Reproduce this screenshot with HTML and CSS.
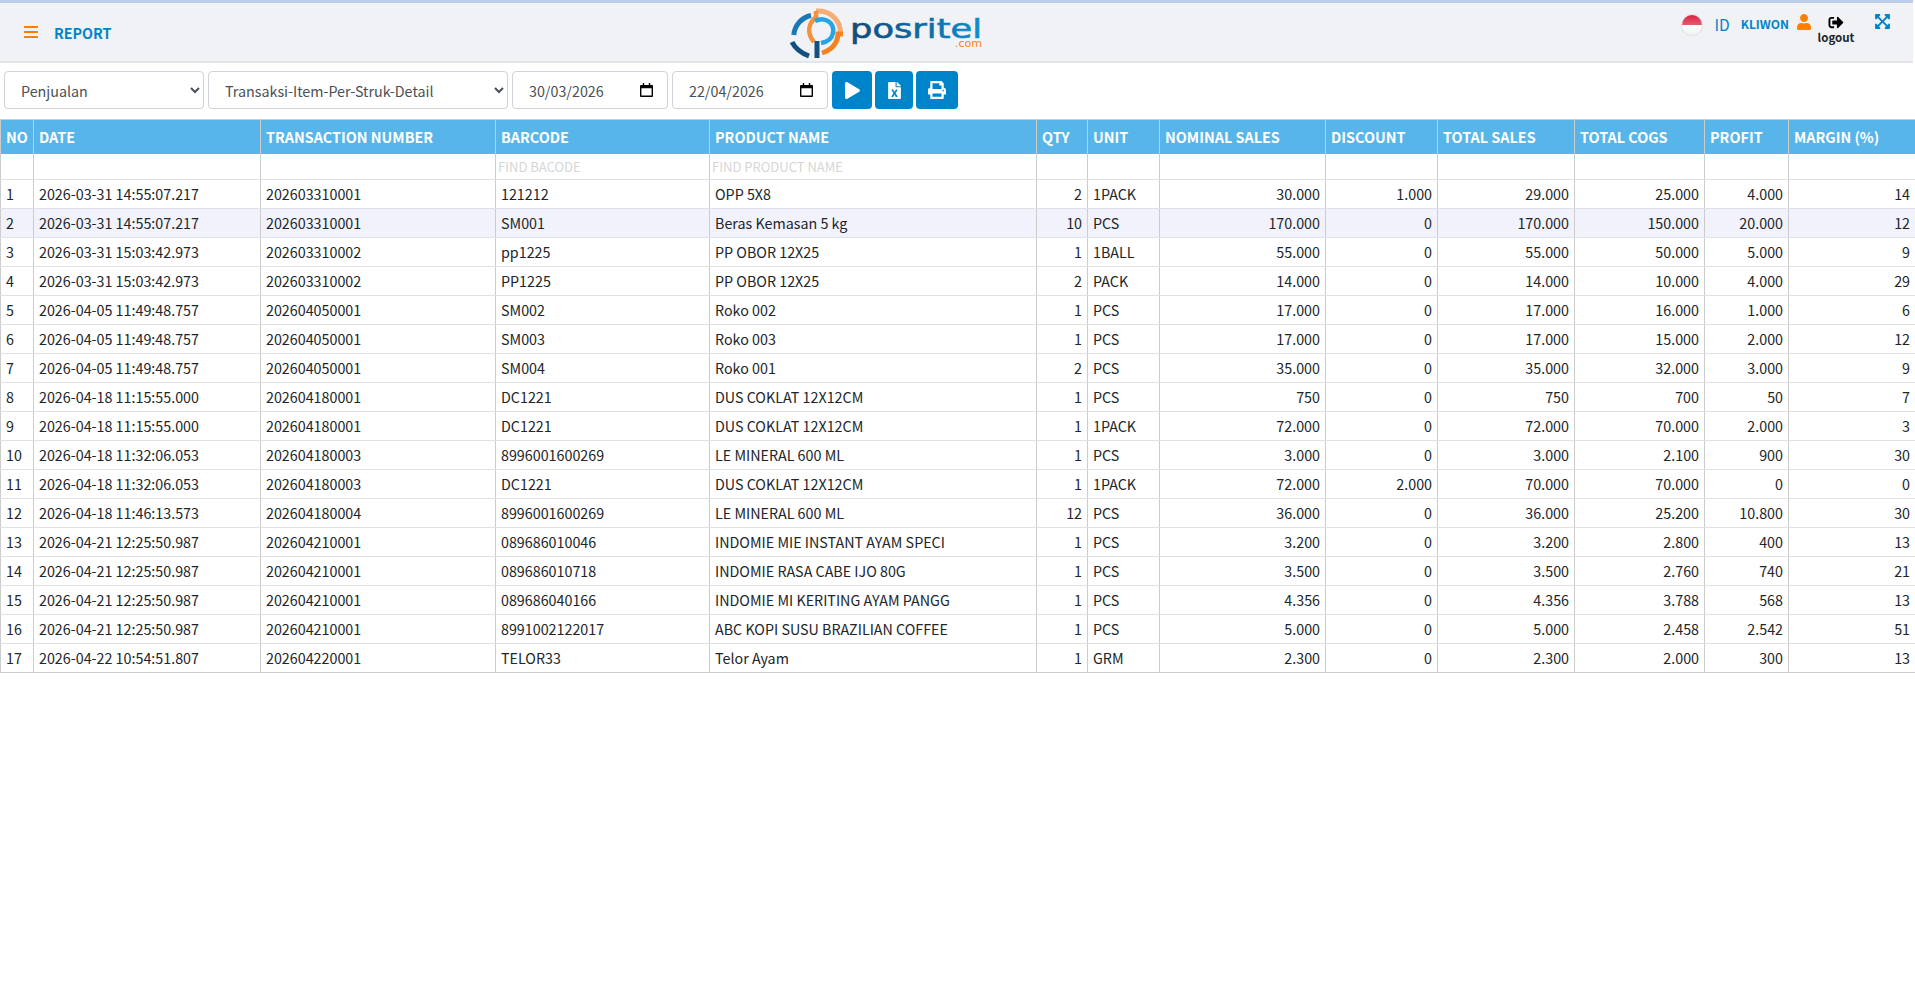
FILE: index.html
```html
<!DOCTYPE html>
<html lang="en">
  <head>
    <meta charset="UTF-8" />
    <meta name="viewport" content="width=device-width, initial-scale=1.0" />
    <title>Posritel Report</title>
    <link rel="stylesheet" href="styles.css">
  </head>
  <body>
    <header class="topbar">
      <div class="topbar-left">
        <svg class="icon-bars" viewBox="0 0 14 12"><path d="M0 0h14v2H0zM0 5h14v2H0zM0 10h14v2H0z"/></svg>
        <span class="page-title">REPORT</span>
      </div>

      <svg class="logo" viewBox="0 0 194 52">
        <defs>
          <linearGradient id="wordFill" x1="0" x2="1" y1="0" y2="0">
            <stop offset="0" stop-color="#124a78"/>
            <stop offset="0.55" stop-color="#0f6aa3"/>
            <stop offset="1" stop-color="#0d8fd0"/>
          </linearGradient>
        </defs>
        <!-- outer ring -->
        <path d="M26 3h3a22 22 0 0 1 21.500 22" fill="none" stroke="#f6ac73" stroke-width="5"/>
        <path d="M21 7.500A21.500 21.500 0 0 0 3.800 27" fill="none" stroke="#1b78b8" stroke-width="5"/>
        <path d="M2 34c3 6 9 11 17 14" fill="none" stroke="#12507f" stroke-width="5"/>
        <path d="M53 26h-5c-.5 10-7 16-16 19" fill="none" stroke="#f58220" stroke-width="5"/>
        <!-- inner shapes -->
        <path d="M26 3v6c-7 6-10 15-2 25" fill="none" stroke="#f4913c" stroke-width="4.500"/>
        <path d="M25 13c10-5 20 2 18 12-1 6-6 9-12 10" fill="none" stroke="#27a4e4" stroke-width="4.500"/>
        <path d="M27 33v17" fill="none" stroke="#12507f" stroke-width="5"/>
        <!-- wordmark -->
        <text class="logo-word" x="60" y="30" textLength="132" lengthAdjust="spacingAndGlyphs" fill="url(#wordFill)" stroke="url(#wordFill)">posritel</text>
        <text class="logo-com" x="192" y="39" text-anchor="end">.com</text>
      </svg>

      <div class="topbar-right">
        <span class="flag"></span>
        <span class="lang">ID</span>
        <span class="username">KLIWON</span>
        <svg class="icon-user" viewBox="0 0 448 512"><path d="M224 256c70.700 0 128-57.300 128-128S294.700 0 224 0 96 57.300 96 128s57.300 128 128 128zm89.600 32h-16.700c-22.200 10.200-46.900 16-72.900 16s-50.600-5.800-72.900-16h-16.700C60.200 288 0 348.200 0 422.400V464c0 26.500 21.500 48 48 48h352c26.500 0 48-21.500 48-48v-41.600c0-74.200-60.200-134.400-134.400-134.400z"/></svg>
        <div class="logout">
          <svg class="icon-logout" viewBox="0 0 512 512"><path d="M497 273L329 441c-15 15-41 4.500-41-17v-96H152c-13.300 0-24-10.700-24-24v-96c0-13.300 10.700-24 24-24h136V88c0-21.400 25.900-32 41-17l168 168c9.300 9.400 9.300 24.600 0 34zM192 436v-40c0-6.600-5.400-12-12-12H96c-17.700 0-32-14.300-32-32V160c0-17.700 14.300-32 32-32h84c6.600 0 12-5.400 12-12V76c0-6.600-5.400-12-12-12H96c-53 0-96 43-96 96v192c0 53 43 96 96 96h84c6.600 0 12-5.400 12-12z"/></svg>
          <span>logout</span>
        </div>
        <svg class="icon-expand" viewBox="0 0 448 512"><path d="M448 344v112a23.940 23.940 0 0 1-24 24H312c-21.390 0-32.090-25.900-17-41l36.200-36.200L224 295.600 116.770 402.900 153 439c15.090 15.100 4.390 41-17 41H24a23.940 23.940 0 0 1-24-24V344c0-21.400 25.890-32.100 41-17l36.190 36.200L184.460 256 77.180 148.700 41 185c-15.100 15.100-41 4.400-41-17V56a23.940 23.940 0 0 1 24-24h112c21.390 0 32.090 25.900 17 41l-36.200 36.200L224 216.400l107.230-107.300L295 73c-15.090-15.100-4.390-41 17-41h112a23.940 23.940 0 0 1 24 24v112c0 21.400-25.890 32.100-41 17l-36.190-36.200L263.540 256l107.280 107.300L407 327.100c15.100-15.200 41-4.500 41 16.900z"/></svg>
      </div>
    </header>

    <div class="filters">
      <select class="field select-type"><option>Penjualan</option></select>
      <select class="field select-report"><option>Transaksi-Item-Per-Struk-Detail</option></select>
      <label class="field field-date">
        <input class="date-text" type="text" value="30/03/2026" />
        <svg class="icon-calendar" viewBox="0 0 14 15"><path d="M3 0h1.500v2h5V0H11v2h2a1 1 0 0 1 1 1v11a1 1 0 0 1-1 1H1a1 1 0 0 1-1-1V3a1 1 0 0 1 1-1h2zM1.500 5.500v8h11v-8z"/></svg>
      </label>
      <label class="field field-date">
        <input class="date-text" type="text" value="22/04/2026" />
        <svg class="icon-calendar" viewBox="0 0 14 15"><path d="M3 0h1.500v2h5V0H11v2h2a1 1 0 0 1 1 1v11a1 1 0 0 1-1 1H1a1 1 0 0 1-1-1V3a1 1 0 0 1 1-1h2zM1.500 5.500v8h11v-8z"/></svg>
      </label>
      <button class="btn btn-play"><svg class="icon-play" viewBox="0 0 448 512"><path d="M424.400 214.700L72.400 6.600C43.800-10.300 0 6.100 0 47.900V464c0 37.500 40.700 60.100 72.400 41.300l352-208c31.400-18.500 31.500-64.100 0-82.600z"/></svg></button>
      <button class="btn btn-excel"><svg class="icon-excel" viewBox="0 0 384 512"><path d="M224 136V0H24C10.700 0 0 10.700 0 24v464c0 13.300 10.700 24 24 24h336c13.300 0 24-10.700 24-24V160H248c-13.200 0-24-10.800-24-24zm60.100 106.500L224 336l60.100 93.500c5.100 8-.6 18.500-10.100 18.500h-34.900c-4.400 0-8.500-2.400-10.600-6.300C208.900 405.500 192 373 192 373c-6.100 14.100-9.500 19-36.600 68.800-2.100 3.900-6.100 6.300-10.500 6.300H110c-9.500 0-15.200-10.500-10.100-18.500l60.300-93.500-60.300-93.500c-5.200-8 .6-18.500 10.100-18.500h34.800c4.400 0 8.500 2.400 10.600 6.300 26.100 48.800 20 33.600 36.600 68.500 0 0 6.100-11.700 36.600-68.500 2.100-3.900 6.200-6.300 10.600-6.300H274c9.500-.1 15.200 10.400 10.100 18.400zM384 121.900v6.100H256V0h6.100c6.400 0 12.500 2.500 17 7l97.900 98c4.500 4.500 7 10.600 7 16.900z"/></svg></button>
      <button class="btn btn-print"><svg class="icon-print" viewBox="0 0 512 512"><path d="M448 192V77.250c0-8.490-3.370-16.620-9.370-22.630L393.370 9.370c-6-6-14.140-9.370-22.630-9.370H96C78.330 0 64 14.330 64 32v160c-35.350 0-64 28.650-64 64v112c0 8.840 7.160 16 16 16h48v96c0 17.670 14.330 32 32 32h320c17.670 0 32-14.330 32-32v-96h48c8.840 0 16-7.160 16-16V256c0-35.350-28.650-64-64-64zm-64 256H128v-96h256v96zm0-224H128V64h192v48c0 8.840 7.160 16 16 16h48v96zm48 72c-13.250 0-24-10.750-24-24 0-13.260 10.750-24 24-24s24 10.740 24 24c0 13.250-10.750 24-24 24z"/></svg></button>
    </div>

    <table class="report">
      <colgroup>
        <col class="col-no" /><col class="col-date" /><col class="col-trx" /><col class="col-barcode" />
        <col class="col-name" /><col class="col-qty" /><col class="col-unit" /><col class="col-nominal" />
        <col class="col-discount" /><col class="col-total" /><col class="col-cogs" /><col class="col-profit" />
        <col class="col-margin" />
      </colgroup>
      <thead>
        <tr>
          <th>NO</th><th>DATE</th><th>TRANSACTION NUMBER</th><th>BARCODE</th><th>PRODUCT NAME</th><th>QTY</th><th>UNIT</th>
          <th>NOMINAL SALES</th><th>DISCOUNT</th><th>TOTAL SALES</th><th>TOTAL COGS</th><th>PROFIT</th><th>MARGIN (%)</th>
        </tr>
        <tr class="find-row">
          <td></td><td></td><td></td>
          <td><input class="find" placeholder="FIND BACODE" /></td>
          <td><input class="find" placeholder="FIND PRODUCT NAME" /></td>
          <td></td><td></td><td></td><td></td><td></td><td></td><td></td><td></td>
        </tr>
      </thead>
      <tbody id="rows"></tbody>
    </table>

    <script src="rows.js"></script>
  </body>
</html>
```

FILE: styles.css
```css
* {
  margin: 0;
  padding: 0;
  box-sizing: border-box;
}

body {
  font-family: "Noto Sans CJK SC", "Noto Sans", sans-serif;
  font-size: 14.3px;
  color: #212529;
  background-color: #fff;
}

.topbar {
  display: flex;
  align-items: flex-start;
  height: 63px;
  margin-right: 2px;
  background-color: #f1f2f5;
  border-top: 3px solid #bccde9;
  border-bottom: 2px solid #e4e5e8;
}

.topbar-left {
  display: flex;
  align-items: center;
  gap: 16px;
  width: 790px;
  height: 62px;
  padding-left: 24px;
  padding-bottom: 4px;
}

.icon-bars {
  width: 14px;
  height: 12px;
  fill: #ff7f00;
}

.page-title {
  font-size: 14.3px;
  font-weight: 700;
  color: #0084c9;
}

.logo {
  width: 194px;
  height: 52px;
  margin-top: 5px;
}

.logo-word {
  font-family: "DejaVu Sans", sans-serif;
  font-size: 27px;
  stroke-width: 0.6;
}

.logo-com {
  font-family: "DejaVu Sans", sans-serif;
  font-size: 11px;
  fill: #f58220;
}

.topbar-right {
  display: flex;
  align-items: flex-start;
  margin-left: auto;
  padding-right: 23px;
  color: #0084c9;
}

.flag {
  width: 20px;
  height: 20px;
  margin-top: 12px;
  margin-right: 12px;
  border-radius: 50%;
  background: linear-gradient(#d9243f 0, #e55c6e 50%, #fff 50%, #f1f1f1 100%);
  box-shadow: 0 0 2px #bbb;
}

.lang {
  margin-top: 11px;
  margin-right: 11px;
  font-size: 15.5px;
  line-height: 20px;
}

.username {
  margin-top: 11px;
  margin-right: 8px;
  font-size: 12px;
  font-weight: 700;
  line-height: 20px;
}

.icon-user {
  width: 14px;
  height: 16px;
  margin-top: 11px;
  fill: #ff7f00;
}

.logout {
  display: flex;
  flex-direction: column;
  align-items: center;
  width: 36px;
  margin-top: 12px;
  margin-left: 7px;
  font-size: 11.5px;
  font-weight: 700;
  line-height: 14px;
  color: #212529;
}

.icon-logout {
  width: 16px;
  height: 15px;
  fill: #000;
}

.icon-expand {
  width: 15px;
  height: 17px;
  margin-top: 10px;
  margin-left: 21px;
  fill: #0084c9;
}

.filters {
  display: flex;
  gap: 4px;
  padding: 8px 4px 10px;
}

.field {
  height: 38px;
  padding: 0 12px;
  font-family: inherit;
  font-size: 14.3px;
  color: #495057;
  background-color: #fff;
  border: 1px solid #ced4da;
  border-radius: 4px;
}

.select-type {
  width: 200px;
}

.select-report {
  width: 300px;
}

.field-date {
  display: flex;
  align-items: center;
  width: 156px;
  padding-left: 16px;
  padding-right: 14px;
}

.date-text {
  flex: 1;
  min-width: 0;
  font-family: inherit;
  font-size: 14.3px;
  color: #495057;
  border: none;
  outline: none;
  background: transparent;
}

.icon-calendar {
  width: 13px;
  height: 14px;
  fill: #000;
}

.btn {
  display: flex;
  align-items: center;
  justify-content: center;
  height: 38px;
  background-color: #0084c9;
  border: none;
  border-radius: 4px;
}

.btn svg {
  fill: #fff;
}

.btn-play {
  width: 40px;
}

.btn-excel {
  width: 38px;
  margin-left: -1px;
}

.btn-print {
  width: 42px;
  margin-left: -1px;
}

.icon-play {
  width: 15px;
  height: 17px;
}

.icon-excel {
  width: 13px;
  height: 17px;
}

.icon-print {
  width: 18px;
  height: 18px;
}

.report {
  width: 100%;
  table-layout: fixed;
  border-collapse: collapse;
  border: 1px solid #ccc;
}

.col-no { width: 33px; }
.col-date { width: 227px; }
.col-trx { width: 235px; }
.col-barcode { width: 214px; }
.col-name { width: 327px; }
.col-qty { width: 51px; }
.col-unit { width: 72px; }
.col-nominal { width: 166px; }
.col-discount { width: 112px; }
.col-total { width: 137px; }
.col-cogs { width: 130px; }
.col-profit { width: 84px; }
.col-margin { width: 127px; }

.report th {
  height: 34px;
  padding: 0 5px;
  font-size: 14.4px;
  font-weight: 700;
  text-align: left;
  white-space: nowrap;
  color: #fff;
  background-color: #57b5ea;
  border: 1px solid #ccc;
  border-bottom: none;
}

.report td {
  height: 29px;
  padding: 0 5px;
  line-height: 20px;
  white-space: nowrap;
  overflow: hidden;
  border-left: 1px solid #ccc;
  border-right: 1px solid #ccc;
  border-bottom: 1px solid #e0e1e6;
}

.report .find-row td {
  height: 26px;
  padding: 0 2px;
}

.find {
  display: block;
  width: 100%;
  font-family: inherit;
  font-size: 13px;
  border: none;
  outline: none;
  background: transparent;
}

.find::placeholder {
  color: #d6d6d6;
}

.report td.num {
  text-align: right;
}

.row-hover td {
  background-color: #f1f2fc;
}

.report tbody tr:last-child td {
  border-bottom: 1px solid #ccc;
}
```

FILE: rows.js
```js
// date, transaction, barcode, name, qty, unit, nominal, discount, total, cogs, profit, margin
const rows = [
  ["2026-03-31 14:55:07.217", "202603310001", "121212", "OPP 5X8", 2, "1PACK", "30.000", "1.000", "29.000", "25.000", "4.000", 14],
  ["2026-03-31 14:55:07.217", "202603310001", "SM001", "Beras Kemasan 5 kg", 10, "PCS", "170.000", "0", "170.000", "150.000", "20.000", 12],
  ["2026-03-31 15:03:42.973", "202603310002", "pp1225", "PP OBOR 12X25", 1, "1BALL", "55.000", "0", "55.000", "50.000", "5.000", 9],
  ["2026-03-31 15:03:42.973", "202603310002", "PP1225", "PP OBOR 12X25", 2, "PACK", "14.000", "0", "14.000", "10.000", "4.000", 29],
  ["2026-04-05 11:49:48.757", "202604050001", "SM002", "Roko 002", 1, "PCS", "17.000", "0", "17.000", "16.000", "1.000", 6],
  ["2026-04-05 11:49:48.757", "202604050001", "SM003", "Roko 003", 1, "PCS", "17.000", "0", "17.000", "15.000", "2.000", 12],
  ["2026-04-05 11:49:48.757", "202604050001", "SM004", "Roko 001", 2, "PCS", "35.000", "0", "35.000", "32.000", "3.000", 9],
  ["2026-04-18 11:15:55.000", "202604180001", "DC1221", "DUS COKLAT 12X12CM", 1, "PCS", "750", "0", "750", "700", "50", 7],
  ["2026-04-18 11:15:55.000", "202604180001", "DC1221", "DUS COKLAT 12X12CM", 1, "1PACK", "72.000", "0", "72.000", "70.000", "2.000", 3],
  ["2026-04-18 11:32:06.053", "202604180003", "8996001600269", "LE MINERAL 600 ML", 1, "PCS", "3.000", "0", "3.000", "2.100", "900", 30],
  ["2026-04-18 11:32:06.053", "202604180003", "DC1221", "DUS COKLAT 12X12CM", 1, "1PACK", "72.000", "2.000", "70.000", "70.000", "0", 0],
  ["2026-04-18 11:46:13.573", "202604180004", "8996001600269", "LE MINERAL 600 ML", 12, "PCS", "36.000", "0", "36.000", "25.200", "10.800", 30],
  ["2026-04-21 12:25:50.987", "202604210001", "089686010046", "INDOMIE MIE INSTANT AYAM SPECI", 1, "PCS", "3.200", "0", "3.200", "2.800", "400", 13],
  ["2026-04-21 12:25:50.987", "202604210001", "089686010718", "INDOMIE RASA CABE IJO 80G", 1, "PCS", "3.500", "0", "3.500", "2.760", "740", 21],
  ["2026-04-21 12:25:50.987", "202604210001", "089686040166", "INDOMIE MI KERITING AYAM PANGG", 1, "PCS", "4.356", "0", "4.356", "3.788", "568", 13],
  ["2026-04-21 12:25:50.987", "202604210001", "8991002122017", "ABC KOPI SUSU BRAZILIAN COFFEE", 1, "PCS", "5.000", "0", "5.000", "2.458", "2.542", 51],
  ["2026-04-22 10:54:51.807", "202604220001", "TELOR33", "Telor Ayam", 1, "GRM", "2.300", "0", "2.300", "2.000", "300", 13],
];

const numColumns = [4, 6, 7, 8, 9, 10, 11];
const tbody = document.getElementById("rows");

rows.forEach((row, i) => {
  const tr = document.createElement("tr");
  if (i === 1) tr.className = "row-hover";

  const no = document.createElement("td");
  no.textContent = i + 1;
  tr.appendChild(no);

  row.forEach((value, col) => {
    const td = document.createElement("td");
    td.textContent = value;
    if (numColumns.includes(col)) td.className = "num";
    tr.appendChild(td);
  });

  tbody.appendChild(tr);
});
```
